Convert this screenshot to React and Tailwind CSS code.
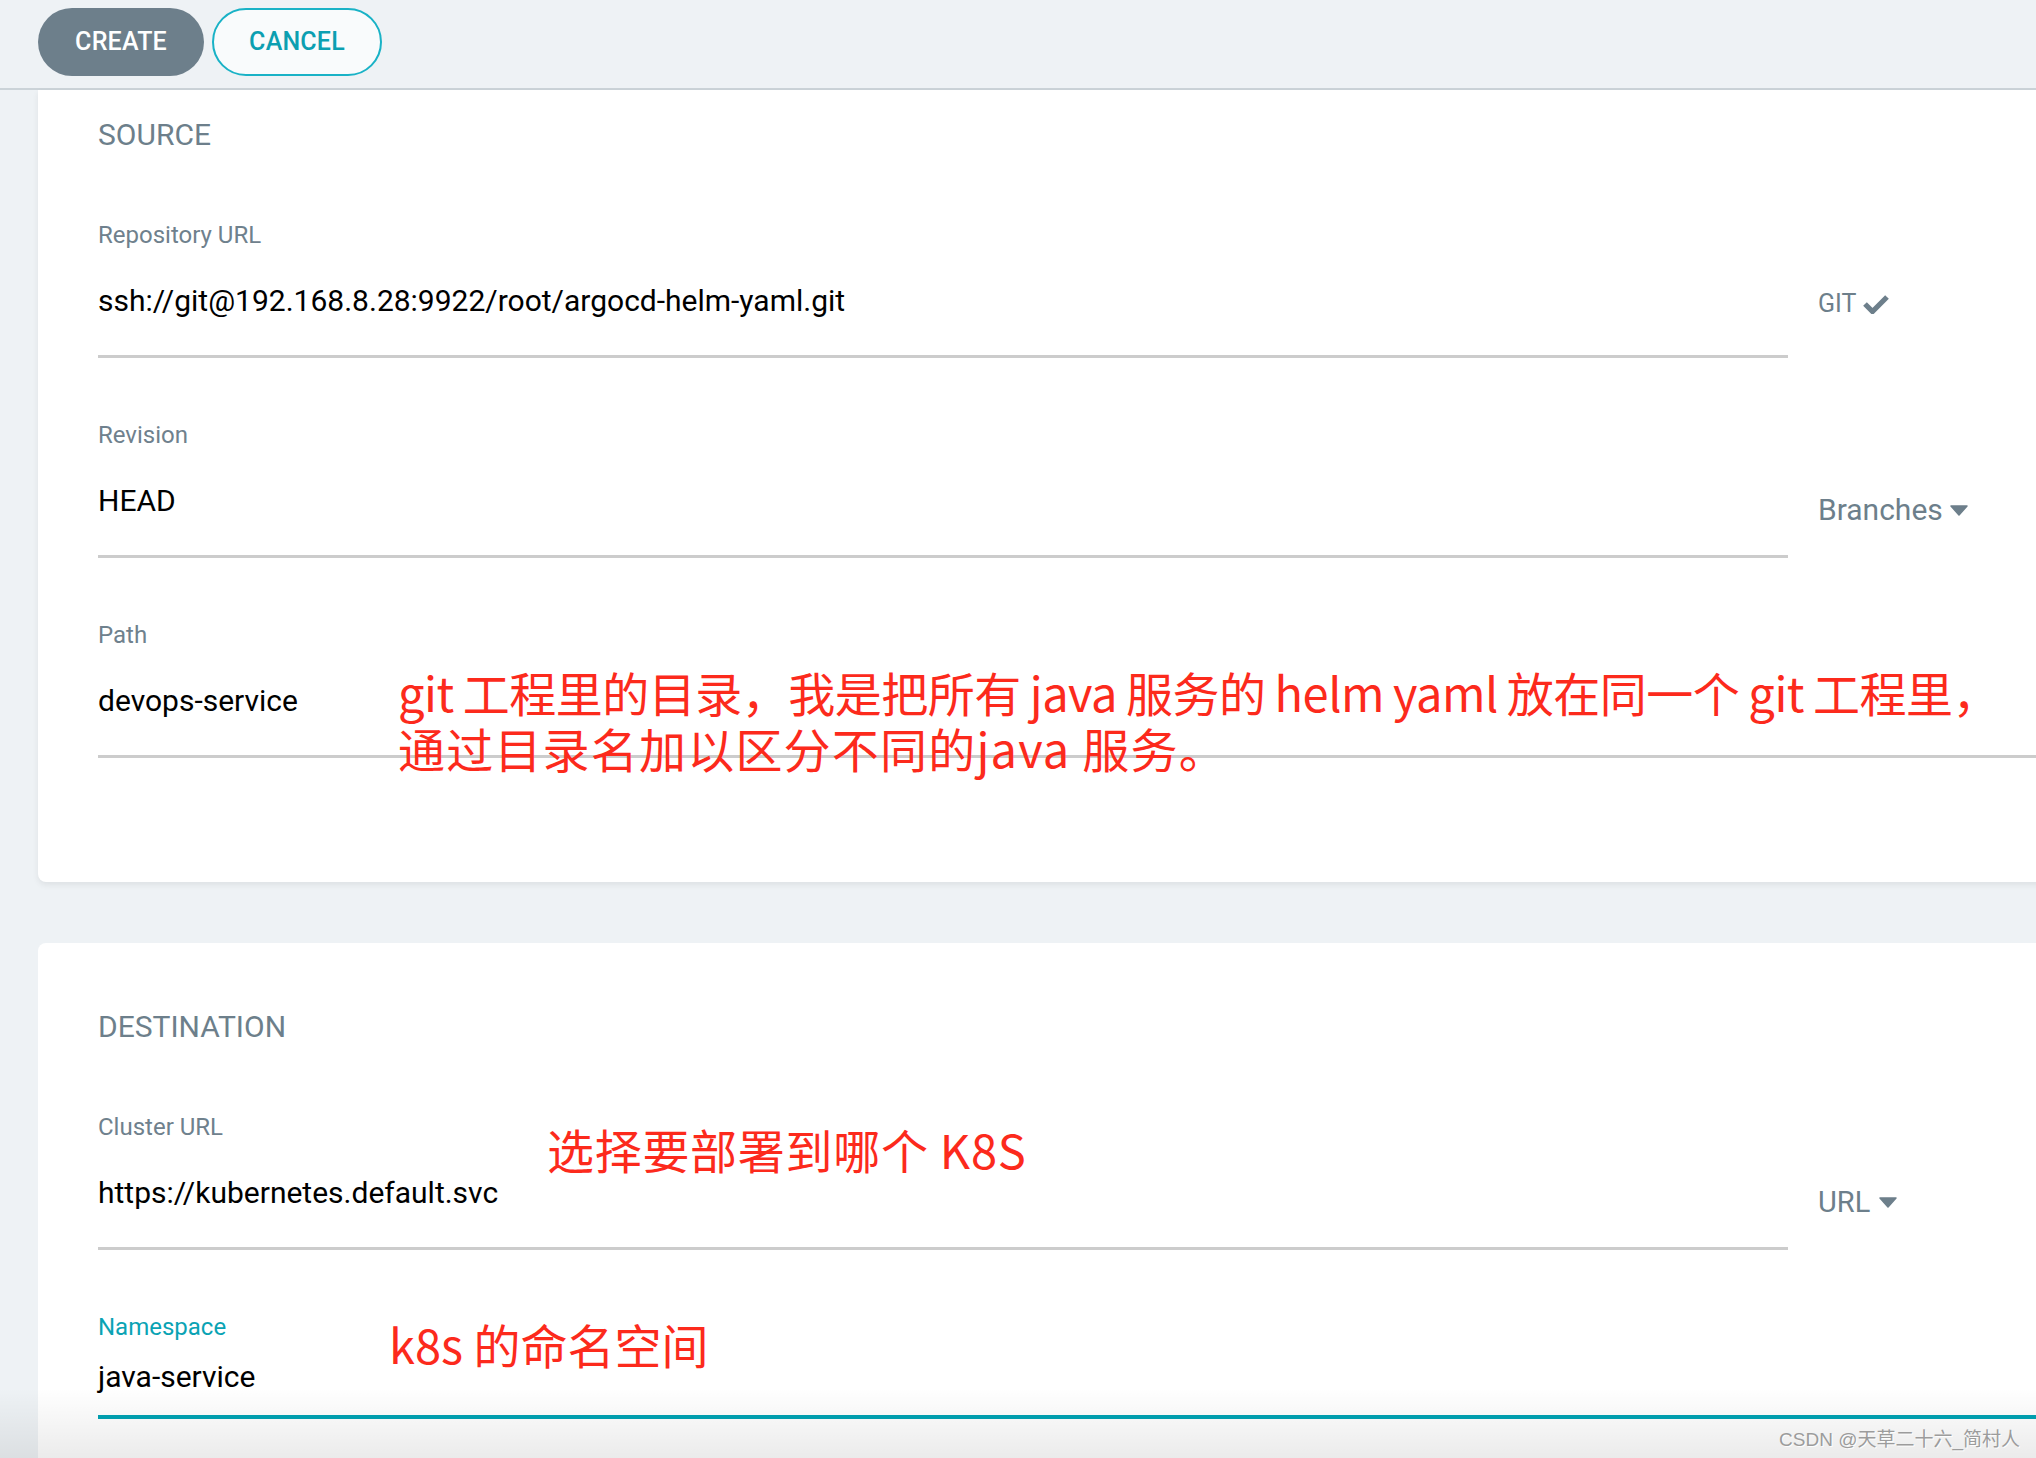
import React from "react";

function Check() {
  return (
    <svg width="26" height="20" viewBox="0 0 26 20" className="inline-block">
      <path d="M2 10 L9.5 17.5 L24 3" fill="none" stroke="#6d7f8b" strokeWidth="5.2" strokeLinejoin="miter" />
    </svg>
  );
}

function Caret() {
  return (
    <svg width="18" height="11" viewBox="0 0 18 11" className="inline-block">
      <path d="M1 1 L17 1 L9 10 Z" fill="#6d7f8b" stroke="#6d7f8b" strokeWidth="1.5" strokeLinejoin="round" />
    </svg>
  );
}

function Field({ label, value, addon, addonTop, full }) {
  return (
    <div className="flex items-start">
      <div className={full ? "flex-1" : "w-[1690px]"}>
        <div className="text-[24px] leading-[28px] text-[#6f818d]">{label}</div>
        <div className="mt-[35px] pb-[37px] border-b-[3px] border-[#cccccc]">
          <div className="text-[30px] leading-[34px] text-black">{value}</div>
        </div>
      </div>
      {addon && (
        <div className="ml-[30px]" style={{ marginTop: addonTop }}>
          {addon}
        </div>
      )}
    </div>
  );
}

export default function App() {
  const red = "text-[#fc2a1c]";
  return (
    <div className="relative w-[2036px] h-[1458px] overflow-hidden bg-[#eef2f5] font-['Roboto',sans-serif]">
      <header className="h-[90px] border-b-2 border-[#cbd3d8] flex items-start gap-[8px] pl-[38px] pt-[8px]">
        <button className="h-[68px] w-[166px] rounded-full bg-[#6d7f8b] text-white text-[25px] font-medium tracking-[0.2px]">
          CREATE
        </button>
        <button className="h-[68px] w-[170px] rounded-full border-2 border-[#19b2c6] bg-[#f9fbfc] text-[#0c9fb1] text-[25px] font-medium tracking-[0.2px]">
          CANCEL
        </button>
      </header>

      <div className="pl-[38px]">
        <section className="w-[2100px] bg-white rounded-b-[8px] shadow-[0_3px_6px_rgba(0,0,0,0.07)] pl-[60px] pt-[27px] pb-[124px]">
          <h2 className="text-[30px] leading-[36px] text-[#6d7f8b]">SOURCE</h2>
          <div className="mt-[68px]">
            <Field
              label="Repository URL"
              value="ssh://git@192.168.8.28:9922/root/argocd-helm-yaml.git"
              addonTop={68}
              addon={
                <div className="flex items-center gap-[7px] text-[25px] leading-[30px] text-[#6d7f8b]">
                  <span>GIT</span>
                  <Check />
                </div>
              }
            />
          </div>
          <div className="mt-[63px]">
            <Field
              label="Revision"
              value="HEAD"
              addonTop={72}
              addon={
                <div className="flex items-center gap-[7px] text-[30px] leading-[34px] text-[#6d7f8b]">
                  <span>Branches</span>
                  <Caret />
                </div>
              }
            />
          </div>
          <div className="mt-[63px]">
            <Field label="Path" value="devops-service" full />
          </div>
        </section>

        <section className="mt-[61px] w-[2100px] h-[600px] bg-white rounded-t-[8px] pl-[60px] pt-[66px]">
          <h2 className="text-[30px] leading-[36px] text-[#6d7f8b]">DESTINATION</h2>
          <div className="mt-[68px]">
            <Field
              label="Cluster URL"
              value="https://kubernetes.default.svc"
              addonTop={72}
              addon={
                <div className="flex items-center gap-[9px] text-[29px] leading-[34px] text-[#6d7f8b]">
                  <span>URL</span>
                  <Caret />
                </div>
              }
            />
          </div>
          <div className="mt-[63px]">
            <div className="text-[24px] leading-[28px] text-[#0aa3b4]">Namespace</div>
            <div className="mt-[19px] pb-[21px] border-b-4 border-[#00a2b3]">
              <div className="text-[30px] leading-[34px] text-black">java-service</div>
            </div>
          </div>
        </section>
      </div>

      {/* annotations */}
      <div
        className={`absolute left-[398px] top-[664px] text-[47px] leading-[56px] whitespace-nowrap ${red} font-['Noto_Sans_CJK_SC',sans-serif]`}
      >
        <div className="tracking-[-0.5px] [word-spacing:-1px]">git 工程里的目录，我是把所有 java 服务的 helm yaml 放在同一个 git 工程里，</div>
        <div className="tracking-[1.2px]">通过目录名加以区分不同的java 服务。</div>
      </div>
      <div
        className={`absolute left-[547px] top-[1121px] text-[47px] leading-[56px] tracking-[0.7px] whitespace-nowrap ${red} font-['Noto_Sans_CJK_SC',sans-serif]`}
      >
        选择要部署到哪个 K8S
      </div>
      <div
        className={`absolute left-[389px] top-[1316px] text-[47px] leading-[56px] whitespace-nowrap ${red} font-['Noto_Sans_CJK_SC',sans-serif]`}
      >
        k8s 的命名空间
      </div>

      {/* bottom fade */}
      <div className="absolute left-0 right-0 bottom-0 h-[70px] bg-linear-to-b from-[rgba(0,0,0,0)] to-[rgba(0,0,0,0.08)] pointer-events-none" />
      <div className="absolute right-[16px] bottom-[7px] text-[19px] leading-[22px] text-[#9c9c9c] font-['Liberation_Sans','Noto_Sans_CJK_SC',sans-serif] [text-shadow:1px_1px_0_rgba(255,255,255,0.9)]">
        CSDN @天草二十六_简村人
      </div>
    </div>
  );
}
